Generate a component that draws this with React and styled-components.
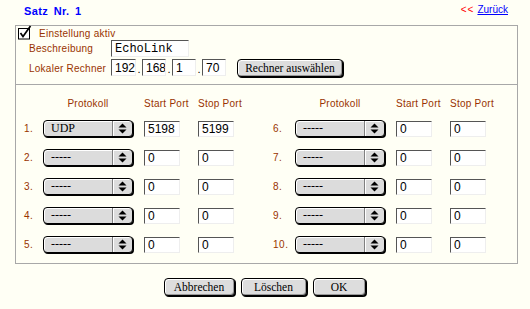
import React from 'react'
import styled, { createGlobalStyle } from 'styled-components'

const GlobalStyle = createGlobalStyle`
  body {
    margin: 0;
    background: #fffff5;
    font-family: "Liberation Sans", Arial, sans-serif;
  }
`

const Page = styled.div`
  width: 530px;
  height: 309px;
`

const TopBar = styled.div`
  display: flex;
  justify-content: space-between;
  box-sizing: border-box;
  height: 25px;
  padding: 0 22px 0 24px;
`

const Title = styled.div`
  margin-top: 5px;
  font-size: 11px;
  line-height: 13px;
  font-weight: bold;
  color: #0000ff;
  letter-spacing: 0.4px;
  word-spacing: 2px;
`

const Back = styled.div`
  margin-top: 4px;
  font-size: 10px;
  line-height: 12px;
  color: #ff0000;
  letter-spacing: 1px;
`

const BackLink = styled.a`
  color: #0000ff;
  text-decoration: underline;
  margin-left: 3px;
  letter-spacing: 0;
`

const Frame = styled.div`
  margin-left: 15px;
  width: 503px;
`

const Settings = styled.div`
  box-sizing: border-box;
  height: 59px;
  padding: 1px 0 0 1px;
  border: 1px solid #a8a8a8;
  border-bottom: none;
`

const ActiveRow = styled.div`
  display: flex;
  align-items: center;
  height: 13px;
`

const CheckBox = styled.svg`
  overflow: visible;
  flex: none;
`

const Label = styled.span`
  color: #993300;
  font-size: 10px;
  letter-spacing: 0.25px;
  margin-left: ${p => p.$ml || 0}px;
  white-space: nowrap;
`

const Fields = styled.div`
  display: grid;
  grid-template-columns: 82px auto;
  grid-template-rows: 17px 19px;
  row-gap: 2px;
  align-items: center;
  padding-left: 12px;
`

const IpGroup = styled.div`
  display: flex;
  align-items: flex-start;
  height: 19px;
`

const Dot = styled.span`
  width: 6px;
  text-align: center;
  font-size: 11px;
  line-height: 20px;
`

const Field = styled.input`
  box-sizing: border-box;
  width: ${p => p.$w || 36}px;
  height: ${p => p.$h || 16}px;
  margin: 0;
  padding: 0 0 0 3px;
  border: 1px solid;
  border-color: #555 #eee #eee #555;
  background: #fff;
  color: #000;
  font-family: ${p => p.$mono ? '"Liberation Mono", monospace' : '"Liberation Sans", Arial, sans-serif'};
  font-size: 12px;
  outline: none;
`

const MacButton = styled.button`
  box-sizing: border-box;
  width: ${p => p.$w}px;
  height: 18px;
  margin: 0 0 0 ${p => p.$ml || 0}px;
  padding: 0;
  border: 1px solid #000;
  border-radius: 4px;
  background: #dddddd;
  box-shadow: 1px 1px 0 #000, inset 1px 1px 0 #fff, inset -1px -1px 0 #999;
  font-family: "Liberation Serif", "Times New Roman", serif;
  font-size: 11.5px;
  color: #000;
  white-space: nowrap;
`

const Ports = styled.div`
  display: flex;
  gap: 39px;
  box-sizing: border-box;
  height: 180px;
  padding: 13px 0 4px 8px;
  border: 1px solid #a8a8a8;
`

const Half = styled.div`
  display: grid;
  grid-template-columns: ${p => p.$numW}px 101px 54px 36px;
  grid-template-rows: 16px repeat(5, 29px);
  align-items: center;
`

const Head = styled.span`
  align-self: start;
  width: ${p => p.$w || 'auto'};
  text-align: ${p => p.$center ? 'center' : 'left'};
  color: #993300;
  font-size: 10px;
  line-height: 12px;
  letter-spacing: 0.25px;
  white-space: nowrap;
`

const Num = styled.span`
  color: #993300;
  font-size: 10px;
  letter-spacing: 0.5px;
`

const Popup = styled.div`
  display: flex;
  box-sizing: border-box;
  width: 90px;
  height: 17px;
  border: 1px solid #000;
  border-radius: 4px;
  background: #dcdcdc;
  box-shadow: 1px 1px 0 #000, inset 1px 1px 0 #fff;
  font-family: "Liberation Serif", "Times New Roman", serif;
  font-size: 12px;
`

const PopupText = styled.span`
  flex: 1;
  padding-left: 7px;
  line-height: 14px;
`

const PopupArrows = styled.span`
  display: flex;
  align-items: center;
  justify-content: center;
  width: 19px;
  border-left: 1px solid #808080;
  box-shadow: inset 1px 0 0 #fff;
`

const Actions = styled.div`
  display: flex;
  justify-content: center;
  gap: 6px;
  margin-top: 14px;
  padding-right: 4px;
`

const rows = [
  { n: 1, proto: 'UDP', start: '5198', stop: '5199' },
  { n: 2, proto: '-----', start: '0', stop: '0' },
  { n: 3, proto: '-----', start: '0', stop: '0' },
  { n: 4, proto: '-----', start: '0', stop: '0' },
  { n: 5, proto: '-----', start: '0', stop: '0' },
  { n: 6, proto: '-----', start: '0', stop: '0' },
  { n: 7, proto: '-----', start: '0', stop: '0' },
  { n: 8, proto: '-----', start: '0', stop: '0' },
  { n: 9, proto: '-----', start: '0', stop: '0' },
  { n: 10, proto: '-----', start: '0', stop: '0' },
]

const Arrows = () => (
  <svg width="9" height="11" viewBox="0 0 9 11">
    <path d="M0.5 4.5 L4.5 0.5 L8.5 4.5 Z" fill="#000" />
    <path d="M0.5 6.5 L8.5 6.5 L4.5 10.5 Z" fill="#000" />
  </svg>
)

const PortHalf = ({ list, numW }) => (
  <Half $numW={numW}>
    <span />
    <Head $w="90px" $center>Protokoll</Head>
    <Head>Start Port</Head>
    <Head>Stop Port</Head>
    {list.map(r => (
      <React.Fragment key={r.n}>
        <Num>{r.n}.</Num>
        <Popup>
          <PopupText>{r.proto}</PopupText>
          <PopupArrows><Arrows /></PopupArrows>
        </Popup>
        <Field defaultValue={r.start} />
        <Field defaultValue={r.stop} />
      </React.Fragment>
    ))}
  </Half>
)

export default function App() {
  return (
    <Page>
      <GlobalStyle />
      <TopBar>
        <Title>Satz Nr. 1</Title>
        <Back>&lt;&lt;<BackLink href="#">Zurück</BackLink></Back>
      </TopBar>
      <Frame>
        <Settings>
          <ActiveRow>
            <CheckBox width="14" height="13" viewBox="0 0 14 13">
              <rect x="1.5" y="1.5" width="11" height="10.5" fill="#fff" stroke="#000" />
              <path d="M3.5 6 L6 9.5 L13.5 -1" fill="none" stroke="#000" strokeWidth="1.7" />
            </CheckBox>
            <Label $ml={8}>Einstellung aktiv</Label>
          </ActiveRow>
          <Fields>
            <Label>Beschreibung</Label>
            <Field $w={78} $h={17} $mono defaultValue="EchoLink" />
            <Label>Lokaler Rechner</Label>
            <IpGroup>
              <Field $w={25} $h={17} defaultValue="192" />
              <Dot>.</Dot>
              <Field $w={24} $h={17} defaultValue="168" />
              <Dot>.</Dot>
              <Field $w={24} $h={17} defaultValue="1" />
              <Dot>.</Dot>
              <Field $w={24} $h={17} defaultValue="70" />
              <MacButton $w={106} $ml={11}>Rechner auswählen</MacButton>
            </IpGroup>
          </Fields>
        </Settings>
        <Ports>
          <PortHalf list={rows.slice(0, 5)} numW={19} />
          <PortHalf list={rows.slice(5)} numW={22} />
        </Ports>
        <Actions>
          <MacButton $w={71}>Abbrechen</MacButton>
          <MacButton $w={66}>Löschen</MacButton>
          <MacButton $w={53}>OK</MacButton>
        </Actions>
      </Frame>
    </Page>
  )
}
